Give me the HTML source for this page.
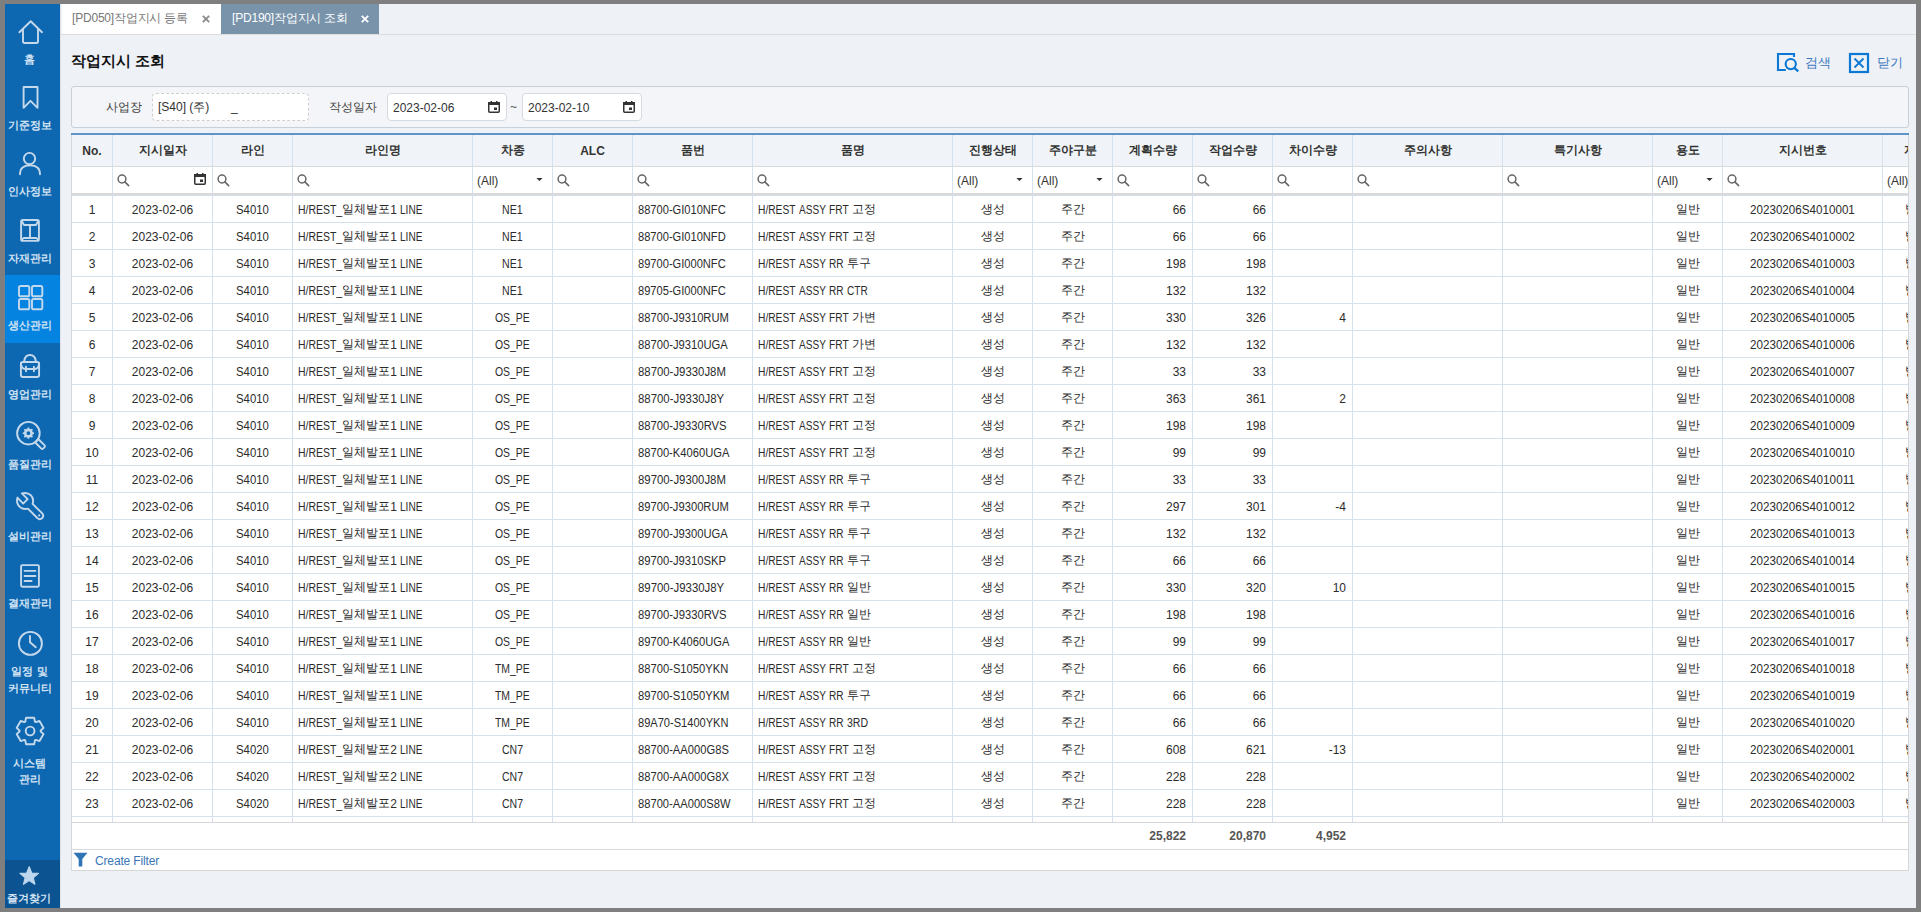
<!DOCTYPE html>
<html><head><meta charset="utf-8"><title>작업지시 조회</title>
<style>
*{box-sizing:border-box;margin:0;padding:0}
html,body{width:1921px;height:912px;overflow:hidden}
body{position:relative;background:#7f7f7f;font-family:"Liberation Sans",sans-serif;font-size:12px;color:#2b2b2b}
.a{position:absolute}
#side{left:5px;top:4px;width:55px;height:904px;background:#0d67b1}
.si{position:absolute;left:0;width:55px;text-align:center;color:#d0e2f3;font-weight:bold;font-size:11px;line-height:12px;white-space:nowrap}
.si svg{position:absolute;left:0;top:0}
#main{left:60px;top:4px;width:1856px;height:904px;background:#eef1f6;border-left:1px solid #dfe4ea}
.tab{position:absolute;top:4px;height:30px;font-size:12px;letter-spacing:-0.2px;line-height:29px;white-space:nowrap}
.cell{position:absolute;height:26px;line-height:28px;white-space:nowrap;overflow:hidden}
.ls{}.ls2{}
.k{position:relative;top:-1px}
.sx{display:inline-block}.sx>span{display:inline-block;transform-origin:0 0;white-space:pre}
.hd{position:absolute;height:31px;line-height:32px;text-align:center;font-weight:bold;color:#333;white-space:nowrap;overflow:hidden}
.vl{position:absolute;width:1px;background:#d5e1ec}
.hl{position:absolute;height:1px;background:#d5e1ec}
.c{text-align:center}.l{text-align:left;padding-left:5px}.r{text-align:right;padding-right:6px}
</style></head><body>
<div id="side" class="a"></div><div class="a" style="left:5px;top:275px;width:55px;height:68px;background:#0583e0"></div><div class="a" style="left:5px;top:860px;width:55px;height:48px;background:#0b5391"></div><svg class="a" style="left:0;top:0" width="60" height="912"><path d="M19.4 32.2 L30.7 21.2 L42 32.2 M23 28.8 V41.3 Q23 43 24.7 43 H36.3 Q38 43 38 41.3 V28.8" fill="none" stroke="#c5d9ec" stroke-width="1.9" stroke-linecap="round" stroke-linejoin="round"/><path d="M23.6 87 H37.5 V107.8 L30.5 100.8 L23.6 107.8 Z" fill="none" stroke="#c5d9ec" stroke-width="1.9" stroke-linecap="round" stroke-linejoin="round" stroke-linejoin="miter" stroke-linecap="butt"/><circle cx="29.5" cy="158.6" r="5.7" fill="none" stroke="#c5d9ec" stroke-width="1.9" stroke-linecap="round" stroke-linejoin="round"/><path d="M20 174.3 Q20 165.4 30 165.4 Q40 165.4 40 174.3" fill="none" stroke="#c5d9ec" stroke-width="1.9" stroke-linecap="round" stroke-linejoin="round"/><rect x="21.1" y="220" width="17.8" height="20.9" rx="2.2" fill="none" stroke="#c5d9ec" stroke-width="1.9" stroke-linecap="round" stroke-linejoin="round"/><path d="M21.5 220.5 L24 225 H36 L38.5 220.5 M30 225 V237.8 M21.5 240.5 L23.5 238 H36.5 L38.5 240.5" fill="none" stroke="#c5d9ec" stroke-width="1.9" stroke-linecap="round" stroke-linejoin="round"/><rect x="19" y="286" width="10.3" height="10.3" rx="1.6" fill="none" stroke="#c5d9ec" stroke-width="1.9" stroke-linecap="round" stroke-linejoin="round"/><rect x="32" y="286" width="10.3" height="10.3" rx="1.6" fill="none" stroke="#c5d9ec" stroke-width="1.9" stroke-linecap="round" stroke-linejoin="round"/><rect x="19" y="299" width="10.3" height="10.3" rx="1.6" fill="none" stroke="#c5d9ec" stroke-width="1.9" stroke-linecap="round" stroke-linejoin="round"/><rect x="32" y="299" width="10.3" height="10.3" rx="1.6" fill="none" stroke="#c5d9ec" stroke-width="1.9" stroke-linecap="round" stroke-linejoin="round"/><path d="M24.2 361 Q25 355 30 355 Q35 355 35.8 361" fill="none" stroke="#c5d9ec" stroke-width="1.9" stroke-linecap="round" stroke-linejoin="round"/><rect x="20.9" y="362" width="18.2" height="15" rx="2" fill="none" stroke="#c5d9ec" stroke-width="1.9" stroke-linecap="round" stroke-linejoin="round"/><path d="M21 363 Q21 369 25.5 369 H34.5 Q39 369 39 363 M26 366.8 V371.3 M33.9 366.8 V371.3" fill="none" stroke="#c5d9ec" stroke-width="1.9" stroke-linecap="round" stroke-linejoin="round"/><circle cx="28.4" cy="433.2" r="11.3" fill="none" stroke="#c5d9ec" stroke-width="1.9" stroke-linecap="round" stroke-linejoin="round"/><rect x="-5" y="-2.3" width="10" height="4.6" rx="1.2" transform="translate(40.3 444.3) rotate(45)" fill="none" stroke="#c5d9ec" stroke-width="1.9" stroke-linecap="round" stroke-linejoin="round"/><path d="M27.35 428.82 L27.62 427.55 L29.18 427.55 L29.45 428.82 L30.75 429.36 L31.84 428.66 L32.94 429.76 L32.24 430.85 L32.78 432.15 L34.05 432.42 L34.05 433.98 L32.78 434.25 L32.24 435.55 L32.94 436.64 L31.84 437.74 L30.75 437.04 L29.45 437.58 L29.18 438.85 L27.62 438.85 L27.35 437.58 L26.05 437.04 L24.96 437.74 L23.86 436.64 L24.56 435.55 L24.02 434.25 L22.75 433.98 L22.75 432.42 L24.02 432.15 L24.56 430.85 L23.86 429.76 L24.96 428.66 L26.05 429.36 Z M30.30 433.20 A1.9 1.9 0 1 0 26.50 433.20 A1.9 1.9 0 1 0 30.30 433.20 Z" fill="#c5d9ec" fill-rule="evenodd"/><path d="M21.9 493.4 L27.6 499.2 L23.2 503.6 L17.4 497.6 Q15.8 504.5 21 507.8 Q24.5 509.6 27.9 508.6 L37.3 518 Q39.8 520.3 42.2 518 Q44.4 515.6 42 513.2 L32.6 503.9 Q34.2 499 31 495.4 Q27.3 492 21.9 493.4 Z" fill="none" stroke="#c5d9ec" stroke-width="1.9" stroke-linecap="round" stroke-linejoin="round"/><circle cx="39.2" cy="515.4" r="1.1" fill="#c5d9ec"/><rect x="21.1" y="565.1" width="17.8" height="21.7" rx="1.2" fill="none" stroke="#c5d9ec" stroke-width="1.9" stroke-linecap="round" stroke-linejoin="round"/><path d="M24.6 570.9 H35.4 M24.6 576 H35.4 M24.6 581 H31.6" fill="none" stroke="#c5d9ec" stroke-width="1.9" stroke-linecap="round" stroke-linejoin="round" stroke-linecap="square"/><circle cx="30.4" cy="643.4" r="11.5" fill="none" stroke="#c5d9ec" stroke-width="1.9" stroke-linecap="round" stroke-linejoin="round"/><path d="M30 636 V642.3 L35.8 647.2" fill="none" stroke="#c5d9ec" stroke-width="1.9" stroke-linecap="round" stroke-linejoin="round"/><path d="M25.29 721.56 L26.07 717.80 L34.13 717.80 L34.91 721.56 L35.87 722.11 L39.51 720.91 L43.55 727.90 L40.69 730.45 L40.69 731.55 L43.55 734.10 L39.51 741.09 L35.87 739.89 L34.91 740.44 L34.13 744.20 L26.07 744.20 L25.29 740.44 L24.33 739.89 L20.69 741.09 L16.65 734.10 L19.51 731.55 L19.51 730.45 L16.65 727.90 L20.69 720.91 L24.33 722.11 Z" fill="none" stroke="#c5d9ec" stroke-width="1.9" stroke-linecap="round" stroke-linejoin="round" stroke-linejoin="miter"/><circle cx="30.1" cy="731" r="4.4" fill="none" stroke="#c5d9ec" stroke-width="1.9" stroke-linecap="round" stroke-linejoin="round"/><path d="M29.20 866.70 L31.67 873.00 L38.43 873.40 L33.19 877.70 L34.90 884.25 L29.20 880.60 L23.50 884.25 L25.21 877.70 L19.97 873.40 L26.73 873.00 Z" fill="#bcd6ee" stroke="#bcd6ee" stroke-width="1.2" stroke-linejoin="round"/></svg><div class="si" style="left:2px;top:53px">홈</div><div class="si" style="left:2px;top:119px">기준정보</div><div class="si" style="left:2px;top:185px">인사정보</div><div class="si" style="left:2px;top:252px">자재관리</div><div class="si" style="left:2px;top:319px">생산관리</div><div class="si" style="left:2px;top:388px">영업관리</div><div class="si" style="left:2px;top:458px">품질관리</div><div class="si" style="left:2px;top:530px">설비관리</div><div class="si" style="left:2px;top:597px">결재관리</div><div class="si" style="left:2px;top:665px">일정 및</div><div class="si" style="left:2px;top:682px">커뮤니티</div><div class="si" style="left:2px;top:757px">시스템</div><div class="si" style="left:2px;top:773px">관리</div><div class="si" style="left:1px;top:892px">즐겨찾기</div><div id="main" class="a"></div><div class="a" style="left:61px;top:34px;width:1855px;height:1px;background:#dcdcdc"></div><div class="tab" style="left:62px;width:159px;background:#fff;color:#777"><span class="a" style="left:10px;top:0">[PD050]작업지시 등록</span><svg class="a" style="left:140px;top:11px" width="9" height="9"><path d="M0.8 0.8 L7.2 7.2 M7.2 0.8 L0.8 7.2" stroke="#8a8a8a" stroke-width="1.8"/></svg></div><div class="tab" style="left:221px;width:158px;background:#7893aa;color:#fff"><span class="a" style="left:11px;top:0">[PD190]작업지시 조회</span><svg class="a" style="left:140px;top:11px" width="9" height="9"><path d="M0.8 0.8 L7.2 7.2 M7.2 0.8 L0.8 7.2" stroke="#fff" stroke-width="1.8"/></svg></div><div class="a" style="left:71px;top:50px;font-size:14.5px;font-weight:bold;color:#111;line-height:22px">작업지시 조회</div><svg class="a" style="left:1770px;top:48px" width="140" height="30"><path d="M24 9 V6 H8 V22 H15.8" fill="none" stroke="#0a78d4" stroke-width="2.1"/><circle cx="20.75" cy="16.1" r="5.1" fill="none" stroke="#0a78d4" stroke-width="2.1"/><path d="M24.4 19.8 L28.2 23.4" fill="none" stroke="#0a78d4" stroke-width="2.3"/><rect x="80" y="6" width="18" height="18" fill="none" stroke="#0a78d4" stroke-width="2.2"/><path d="M84.5 10.5 L93.5 19.5 M93.5 10.5 L84.5 19.5" fill="none" stroke="#0a78d4" stroke-width="1.8"/></svg><div class="a" style="left:1805px;top:54px;font-size:12.5px;line-height:18px;color:#3d78c0">검색</div><div class="a" style="left:1877px;top:54px;font-size:12.5px;line-height:18px;color:#3d78c0">닫기</div><div class="a" style="left:71px;top:86px;width:1838px;height:42px;background:#f3f5f8;border:1px solid #c8d0da;border-radius:3px"></div><div class="a" style="left:106px;top:98px;font-size:12px;line-height:18px;color:#444">사업장</div><div class="a" style="left:152px;top:93px;width:157px;height:28px;background:#fff;border:1px dashed #cfcfcf;border-radius:4px"></div><div class="a" style="left:158px;top:98px;font-size:12px;line-height:18px;color:#333">[S40] (주)</div><div class="a" style="left:231px;top:98px;font-size:12px;line-height:18px;color:#333">_</div><div class="a" style="left:329px;top:98px;font-size:12px;line-height:18px;color:#444">작성일자</div><div class="a" style="left:387px;top:93px;width:120px;height:28px;background:#fff;border:1px solid #d6dade;border-radius:4px"></div><div class="a" style="left:393px;top:99px;font-size:12px;line-height:18px;color:#333">2023-02-06</div><svg class="a" style="left:488px;top:101px" width="12" height="12"><rect x="0.75" y="1.75" width="10.5" height="9.5" rx="1" fill="none" stroke="#333" stroke-width="1.5"/><rect x="0" y="1" width="12" height="3" fill="#333"/><rect x="2.5" y="0" width="1.5" height="2" fill="#333"/><rect x="8" y="0" width="1.5" height="2" fill="#333"/><rect x="6" y="6.5" width="3" height="2.5" fill="#333"/></svg><div class="a" style="left:522px;top:93px;width:120px;height:28px;background:#fff;border:1px solid #d6dade;border-radius:4px"></div><div class="a" style="left:528px;top:99px;font-size:12px;line-height:18px;color:#333">2023-02-10</div><svg class="a" style="left:623px;top:101px" width="12" height="12"><rect x="0.75" y="1.75" width="10.5" height="9.5" rx="1" fill="none" stroke="#333" stroke-width="1.5"/><rect x="0" y="1" width="12" height="3" fill="#333"/><rect x="2.5" y="0" width="1.5" height="2" fill="#333"/><rect x="8" y="0" width="1.5" height="2" fill="#333"/><rect x="6" y="6.5" width="3" height="2.5" fill="#333"/></svg><div class="a" style="left:510px;top:98px;font-size:12px;line-height:18px;color:#555">~</div><div class="a" style="left:71px;top:133px;width:1838px;height:738px;background:#fff;border-left:1px solid #d8d8d8;border-right:1px solid #d6d6d6;border-bottom:1px solid #d6d6d6"></div><div class="a" style="left:71px;top:133px;width:1838px;height:2px;background:#5f94c8"></div><div class="a" style="left:72px;top:135px;width:1836px;height:31px;background:#f0f3f7"></div><div class="a" style="left:72px;top:166px;width:1836px;height:1px;background:#d9dbde"></div><div class="a" style="left:72px;top:193px;width:1836px;height:2px;background:#d9d9d9"></div><div class="a" style="left:72px;top:195px;width:1836px;height:1px;background:#d3dfea"></div><div class="a" style="left:72px;top:135px;width:1836px;height:687px;overflow:hidden"><div class="vl" style="left:40px;top:0;height:58px"></div><div class="vl" style="left:40px;top:61px;height:626px"></div><div class="vl" style="left:140px;top:0;height:58px"></div><div class="vl" style="left:140px;top:61px;height:626px"></div><div class="vl" style="left:220px;top:0;height:58px"></div><div class="vl" style="left:220px;top:61px;height:626px"></div><div class="vl" style="left:400px;top:0;height:58px"></div><div class="vl" style="left:400px;top:61px;height:626px"></div><div class="vl" style="left:480px;top:0;height:58px"></div><div class="vl" style="left:480px;top:61px;height:626px"></div><div class="vl" style="left:560px;top:0;height:58px"></div><div class="vl" style="left:560px;top:61px;height:626px"></div><div class="vl" style="left:680px;top:0;height:58px"></div><div class="vl" style="left:680px;top:61px;height:626px"></div><div class="vl" style="left:880px;top:0;height:58px"></div><div class="vl" style="left:880px;top:61px;height:626px"></div><div class="vl" style="left:960px;top:0;height:58px"></div><div class="vl" style="left:960px;top:61px;height:626px"></div><div class="vl" style="left:1040px;top:0;height:58px"></div><div class="vl" style="left:1040px;top:61px;height:626px"></div><div class="vl" style="left:1120px;top:0;height:58px"></div><div class="vl" style="left:1120px;top:61px;height:626px"></div><div class="vl" style="left:1200px;top:0;height:58px"></div><div class="vl" style="left:1200px;top:61px;height:626px"></div><div class="vl" style="left:1280px;top:0;height:58px"></div><div class="vl" style="left:1280px;top:61px;height:626px"></div><div class="vl" style="left:1430px;top:0;height:58px"></div><div class="vl" style="left:1430px;top:61px;height:626px"></div><div class="vl" style="left:1580px;top:0;height:58px"></div><div class="vl" style="left:1580px;top:61px;height:626px"></div><div class="vl" style="left:1650px;top:0;height:58px"></div><div class="vl" style="left:1650px;top:61px;height:626px"></div><div class="vl" style="left:1810px;top:0;height:58px"></div><div class="vl" style="left:1810px;top:61px;height:626px"></div><div class="hd" style="left:0px;top:0;width:40px">No.</div><div class="hd" style="left:41px;top:0;width:99px"><span class="k">지시일자</span></div><div class="hd" style="left:141px;top:0;width:79px"><span class="k">라인</span></div><div class="hd" style="left:221px;top:0;width:179px"><span class="k">라인명</span></div><div class="hd" style="left:401px;top:0;width:79px"><span class="k">차종</span></div><div class="hd" style="left:481px;top:0;width:79px">ALC</div><div class="hd" style="left:561px;top:0;width:119px"><span class="k">품번</span></div><div class="hd" style="left:681px;top:0;width:199px"><span class="k">품명</span></div><div class="hd" style="left:881px;top:0;width:79px"><span class="k">진행상태</span></div><div class="hd" style="left:961px;top:0;width:79px"><span class="k">주야구분</span></div><div class="hd" style="left:1041px;top:0;width:79px"><span class="k">계획수량</span></div><div class="hd" style="left:1121px;top:0;width:79px"><span class="k">작업수량</span></div><div class="hd" style="left:1201px;top:0;width:79px"><span class="k">차이수량</span></div><div class="hd" style="left:1281px;top:0;width:149px"><span class="k">주의사항</span></div><div class="hd" style="left:1431px;top:0;width:149px"><span class="k">특기사항</span></div><div class="hd" style="left:1581px;top:0;width:69px"><span class="k">용도</span></div><div class="hd" style="left:1651px;top:0;width:159px"><span class="k">지시번호</span></div><div class="hd" style="left:1832px;top:0;width:60px;text-align:left"><span class="k">지시구분</span></div><svg class="a" style="left:45px;top:39px" width="14" height="14"><circle cx="5" cy="5" r="3.9" fill="none" stroke="#666" stroke-width="1.5"/><path d="M7.9 7.9 L11.6 11.6" stroke="#666" stroke-width="1.6" stroke-linecap="round"/></svg><svg class="a" style="left:122px;top:38px" width="12" height="12"><rect x="0.75" y="1.75" width="10.5" height="9.5" rx="1" fill="none" stroke="#333" stroke-width="1.5"/><rect x="0" y="1" width="12" height="3" fill="#333"/><rect x="2.5" y="0" width="1.5" height="2" fill="#333"/><rect x="8" y="0" width="1.5" height="2" fill="#333"/><rect x="6" y="6.5" width="3" height="2.5" fill="#333"/></svg><svg class="a" style="left:145px;top:39px" width="14" height="14"><circle cx="5" cy="5" r="3.9" fill="none" stroke="#666" stroke-width="1.5"/><path d="M7.9 7.9 L11.6 11.6" stroke="#666" stroke-width="1.6" stroke-linecap="round"/></svg><svg class="a" style="left:225px;top:39px" width="14" height="14"><circle cx="5" cy="5" r="3.9" fill="none" stroke="#666" stroke-width="1.5"/><path d="M7.9 7.9 L11.6 11.6" stroke="#666" stroke-width="1.6" stroke-linecap="round"/></svg><div class="a" style="left:405px;top:33px;line-height:26px;color:#333">(All)</div><svg class="a" style="left:464px;top:43px" width="8" height="5"><path d="M0.4 0 H6.6 L3.5 3 Z" fill="#333"/></svg><svg class="a" style="left:485px;top:39px" width="14" height="14"><circle cx="5" cy="5" r="3.9" fill="none" stroke="#666" stroke-width="1.5"/><path d="M7.9 7.9 L11.6 11.6" stroke="#666" stroke-width="1.6" stroke-linecap="round"/></svg><svg class="a" style="left:565px;top:39px" width="14" height="14"><circle cx="5" cy="5" r="3.9" fill="none" stroke="#666" stroke-width="1.5"/><path d="M7.9 7.9 L11.6 11.6" stroke="#666" stroke-width="1.6" stroke-linecap="round"/></svg><svg class="a" style="left:685px;top:39px" width="14" height="14"><circle cx="5" cy="5" r="3.9" fill="none" stroke="#666" stroke-width="1.5"/><path d="M7.9 7.9 L11.6 11.6" stroke="#666" stroke-width="1.6" stroke-linecap="round"/></svg><div class="a" style="left:885px;top:33px;line-height:26px;color:#333">(All)</div><svg class="a" style="left:944px;top:43px" width="8" height="5"><path d="M0.4 0 H6.6 L3.5 3 Z" fill="#333"/></svg><div class="a" style="left:965px;top:33px;line-height:26px;color:#333">(All)</div><svg class="a" style="left:1024px;top:43px" width="8" height="5"><path d="M0.4 0 H6.6 L3.5 3 Z" fill="#333"/></svg><svg class="a" style="left:1045px;top:39px" width="14" height="14"><circle cx="5" cy="5" r="3.9" fill="none" stroke="#666" stroke-width="1.5"/><path d="M7.9 7.9 L11.6 11.6" stroke="#666" stroke-width="1.6" stroke-linecap="round"/></svg><svg class="a" style="left:1125px;top:39px" width="14" height="14"><circle cx="5" cy="5" r="3.9" fill="none" stroke="#666" stroke-width="1.5"/><path d="M7.9 7.9 L11.6 11.6" stroke="#666" stroke-width="1.6" stroke-linecap="round"/></svg><svg class="a" style="left:1205px;top:39px" width="14" height="14"><circle cx="5" cy="5" r="3.9" fill="none" stroke="#666" stroke-width="1.5"/><path d="M7.9 7.9 L11.6 11.6" stroke="#666" stroke-width="1.6" stroke-linecap="round"/></svg><svg class="a" style="left:1285px;top:39px" width="14" height="14"><circle cx="5" cy="5" r="3.9" fill="none" stroke="#666" stroke-width="1.5"/><path d="M7.9 7.9 L11.6 11.6" stroke="#666" stroke-width="1.6" stroke-linecap="round"/></svg><svg class="a" style="left:1435px;top:39px" width="14" height="14"><circle cx="5" cy="5" r="3.9" fill="none" stroke="#666" stroke-width="1.5"/><path d="M7.9 7.9 L11.6 11.6" stroke="#666" stroke-width="1.6" stroke-linecap="round"/></svg><div class="a" style="left:1585px;top:33px;line-height:26px;color:#333">(All)</div><svg class="a" style="left:1634px;top:43px" width="8" height="5"><path d="M0.4 0 H6.6 L3.5 3 Z" fill="#333"/></svg><svg class="a" style="left:1655px;top:39px" width="14" height="14"><circle cx="5" cy="5" r="3.9" fill="none" stroke="#666" stroke-width="1.5"/><path d="M7.9 7.9 L11.6 11.6" stroke="#666" stroke-width="1.6" stroke-linecap="round"/></svg><div class="a" style="left:1815px;top:33px;line-height:26px;color:#333">(All)</div><div class="hl" style="left:0;top:87px;width:1838px"></div><div class="cell" style="left:1833px;top:61px;width:40px"><span class="k">발행</span></div><div class="cell c" style="left:0px;top:61px;width:40px">1</div><div class="cell c" style="left:41px;top:61px;width:99px">2023-02-06</div><div class="cell c" style="left:141px;top:61px;width:79px"><span class="sx" style="width:32.87px"><span style="transform:scaleX(0.9477)">S4010</span></span></div><div class="cell l ls" style="left:221px;top:61px;width:179px"><span class="sx" style="width:44.16px"><span style="transform:scaleX(0.8716)">H/REST_</span></span><span class="k">일체발포</span>1 <span class="sx" style="width:22.40px"><span style="transform:scaleX(0.8400)">LINE</span></span></div><div class="cell c ls" style="left:401px;top:61px;width:79px"><span class="sx" style="width:20.54px"><span style="transform:scaleX(0.8800)">NE1</span></span></div><div class="cell l ls" style="left:561px;top:61px;width:119px"><span class="sx" style="width:87.66px"><span style="transform:scaleX(0.9257)">88700-GI010NFC</span></span></div><div class="cell l ls" style="left:681px;top:61px;width:199px"><span class="sx" style="width:37.49px"><span style="transform:scaleX(0.8521)">H/REST</span></span> <span class="sx" style="width:26.88px"><span style="transform:scaleX(0.8400)">ASSY</span></span> <span class="sx" style="width:19.60px"><span style="transform:scaleX(0.8480)">FRT</span></span> <span class="k">고정</span></div><div class="cell c" style="left:881px;top:61px;width:79px"><span class="k">생성</span></div><div class="cell c" style="left:961px;top:61px;width:79px"><span class="k">주간</span></div><div class="cell r" style="left:1041px;top:61px;width:79px">66</div><div class="cell r" style="left:1121px;top:61px;width:79px">66</div><div class="cell c" style="left:1581px;top:61px;width:69px"><span class="k">일반</span></div><div class="cell c ls2" style="left:1651px;top:61px;width:159px"><span class="sx" style="width:104.80px"><span style="transform:scaleX(0.9696)">20230206S4010001</span></span></div><div class="hl" style="left:0;top:114px;width:1838px"></div><div class="cell" style="left:1833px;top:88px;width:40px"><span class="k">발행</span></div><div class="cell c" style="left:0px;top:88px;width:40px">2</div><div class="cell c" style="left:41px;top:88px;width:99px">2023-02-06</div><div class="cell c" style="left:141px;top:88px;width:79px"><span class="sx" style="width:32.87px"><span style="transform:scaleX(0.9477)">S4010</span></span></div><div class="cell l ls" style="left:221px;top:88px;width:179px"><span class="sx" style="width:44.16px"><span style="transform:scaleX(0.8716)">H/REST_</span></span><span class="k">일체발포</span>1 <span class="sx" style="width:22.40px"><span style="transform:scaleX(0.8400)">LINE</span></span></div><div class="cell c ls" style="left:401px;top:88px;width:79px"><span class="sx" style="width:20.54px"><span style="transform:scaleX(0.8800)">NE1</span></span></div><div class="cell l ls" style="left:561px;top:88px;width:119px"><span class="sx" style="width:87.66px"><span style="transform:scaleX(0.9257)">88700-GI010NFD</span></span></div><div class="cell l ls" style="left:681px;top:88px;width:199px"><span class="sx" style="width:37.49px"><span style="transform:scaleX(0.8521)">H/REST</span></span> <span class="sx" style="width:26.88px"><span style="transform:scaleX(0.8400)">ASSY</span></span> <span class="sx" style="width:19.60px"><span style="transform:scaleX(0.8480)">FRT</span></span> <span class="k">고정</span></div><div class="cell c" style="left:881px;top:88px;width:79px"><span class="k">생성</span></div><div class="cell c" style="left:961px;top:88px;width:79px"><span class="k">주간</span></div><div class="cell r" style="left:1041px;top:88px;width:79px">66</div><div class="cell r" style="left:1121px;top:88px;width:79px">66</div><div class="cell c" style="left:1581px;top:88px;width:69px"><span class="k">일반</span></div><div class="cell c ls2" style="left:1651px;top:88px;width:159px"><span class="sx" style="width:104.80px"><span style="transform:scaleX(0.9696)">20230206S4010002</span></span></div><div class="hl" style="left:0;top:141px;width:1838px"></div><div class="cell" style="left:1833px;top:115px;width:40px"><span class="k">발행</span></div><div class="cell c" style="left:0px;top:115px;width:40px">3</div><div class="cell c" style="left:41px;top:115px;width:99px">2023-02-06</div><div class="cell c" style="left:141px;top:115px;width:79px"><span class="sx" style="width:32.87px"><span style="transform:scaleX(0.9477)">S4010</span></span></div><div class="cell l ls" style="left:221px;top:115px;width:179px"><span class="sx" style="width:44.16px"><span style="transform:scaleX(0.8716)">H/REST_</span></span><span class="k">일체발포</span>1 <span class="sx" style="width:22.40px"><span style="transform:scaleX(0.8400)">LINE</span></span></div><div class="cell c ls" style="left:401px;top:115px;width:79px"><span class="sx" style="width:20.54px"><span style="transform:scaleX(0.8800)">NE1</span></span></div><div class="cell l ls" style="left:561px;top:115px;width:119px"><span class="sx" style="width:87.66px"><span style="transform:scaleX(0.9257)">89700-GI000NFC</span></span></div><div class="cell l ls" style="left:681px;top:115px;width:199px"><span class="sx" style="width:37.49px"><span style="transform:scaleX(0.8521)">H/REST</span></span> <span class="sx" style="width:26.88px"><span style="transform:scaleX(0.8400)">ASSY</span></span> <span class="sx" style="width:14.57px"><span style="transform:scaleX(0.8400)">RR</span></span> <span class="k">투구</span></div><div class="cell c" style="left:881px;top:115px;width:79px"><span class="k">생성</span></div><div class="cell c" style="left:961px;top:115px;width:79px"><span class="k">주간</span></div><div class="cell r" style="left:1041px;top:115px;width:79px">198</div><div class="cell r" style="left:1121px;top:115px;width:79px">198</div><div class="cell c" style="left:1581px;top:115px;width:69px"><span class="k">일반</span></div><div class="cell c ls2" style="left:1651px;top:115px;width:159px"><span class="sx" style="width:104.80px"><span style="transform:scaleX(0.9696)">20230206S4010003</span></span></div><div class="hl" style="left:0;top:168px;width:1838px"></div><div class="cell" style="left:1833px;top:142px;width:40px"><span class="k">발행</span></div><div class="cell c" style="left:0px;top:142px;width:40px">4</div><div class="cell c" style="left:41px;top:142px;width:99px">2023-02-06</div><div class="cell c" style="left:141px;top:142px;width:79px"><span class="sx" style="width:32.87px"><span style="transform:scaleX(0.9477)">S4010</span></span></div><div class="cell l ls" style="left:221px;top:142px;width:179px"><span class="sx" style="width:44.16px"><span style="transform:scaleX(0.8716)">H/REST_</span></span><span class="k">일체발포</span>1 <span class="sx" style="width:22.40px"><span style="transform:scaleX(0.8400)">LINE</span></span></div><div class="cell c ls" style="left:401px;top:142px;width:79px"><span class="sx" style="width:20.54px"><span style="transform:scaleX(0.8800)">NE1</span></span></div><div class="cell l ls" style="left:561px;top:142px;width:119px"><span class="sx" style="width:87.66px"><span style="transform:scaleX(0.9257)">89705-GI000NFC</span></span></div><div class="cell l ls" style="left:681px;top:142px;width:199px"><span class="sx" style="width:37.49px"><span style="transform:scaleX(0.8521)">H/REST</span></span> <span class="sx" style="width:26.88px"><span style="transform:scaleX(0.8400)">ASSY</span></span> <span class="sx" style="width:14.57px"><span style="transform:scaleX(0.8400)">RR</span></span> <span class="sx" style="width:20.72px"><span style="transform:scaleX(0.8400)">CTR</span></span></div><div class="cell c" style="left:881px;top:142px;width:79px"><span class="k">생성</span></div><div class="cell c" style="left:961px;top:142px;width:79px"><span class="k">주간</span></div><div class="cell r" style="left:1041px;top:142px;width:79px">132</div><div class="cell r" style="left:1121px;top:142px;width:79px">132</div><div class="cell c" style="left:1581px;top:142px;width:69px"><span class="k">일반</span></div><div class="cell c ls2" style="left:1651px;top:142px;width:159px"><span class="sx" style="width:104.80px"><span style="transform:scaleX(0.9696)">20230206S4010004</span></span></div><div class="hl" style="left:0;top:195px;width:1838px"></div><div class="cell" style="left:1833px;top:169px;width:40px"><span class="k">발행</span></div><div class="cell c" style="left:0px;top:169px;width:40px">5</div><div class="cell c" style="left:41px;top:169px;width:99px">2023-02-06</div><div class="cell c" style="left:141px;top:169px;width:79px"><span class="sx" style="width:32.87px"><span style="transform:scaleX(0.9477)">S4010</span></span></div><div class="cell l ls" style="left:221px;top:169px;width:179px"><span class="sx" style="width:44.16px"><span style="transform:scaleX(0.8716)">H/REST_</span></span><span class="k">일체발포</span>1 <span class="sx" style="width:22.40px"><span style="transform:scaleX(0.8400)">LINE</span></span></div><div class="cell c ls" style="left:401px;top:169px;width:79px"><span class="sx" style="width:34.67px"><span style="transform:scaleX(0.8667)">OS_PE</span></span></div><div class="cell l ls" style="left:561px;top:169px;width:119px"><span class="sx" style="width:90.85px"><span style="transform:scaleX(0.9329)">88700-J9310RUM</span></span></div><div class="cell l ls" style="left:681px;top:169px;width:199px"><span class="sx" style="width:37.49px"><span style="transform:scaleX(0.8521)">H/REST</span></span> <span class="sx" style="width:26.88px"><span style="transform:scaleX(0.8400)">ASSY</span></span> <span class="sx" style="width:19.60px"><span style="transform:scaleX(0.8480)">FRT</span></span> <span class="k">가변</span></div><div class="cell c" style="left:881px;top:169px;width:79px"><span class="k">생성</span></div><div class="cell c" style="left:961px;top:169px;width:79px"><span class="k">주간</span></div><div class="cell r" style="left:1041px;top:169px;width:79px">330</div><div class="cell r" style="left:1121px;top:169px;width:79px">326</div><div class="cell r" style="left:1201px;top:169px;width:79px">4</div><div class="cell c" style="left:1581px;top:169px;width:69px"><span class="k">일반</span></div><div class="cell c ls2" style="left:1651px;top:169px;width:159px"><span class="sx" style="width:104.80px"><span style="transform:scaleX(0.9696)">20230206S4010005</span></span></div><div class="hl" style="left:0;top:222px;width:1838px"></div><div class="cell" style="left:1833px;top:196px;width:40px"><span class="k">발행</span></div><div class="cell c" style="left:0px;top:196px;width:40px">6</div><div class="cell c" style="left:41px;top:196px;width:99px">2023-02-06</div><div class="cell c" style="left:141px;top:196px;width:79px"><span class="sx" style="width:32.87px"><span style="transform:scaleX(0.9477)">S4010</span></span></div><div class="cell l ls" style="left:221px;top:196px;width:179px"><span class="sx" style="width:44.16px"><span style="transform:scaleX(0.8716)">H/REST_</span></span><span class="k">일체발포</span>1 <span class="sx" style="width:22.40px"><span style="transform:scaleX(0.8400)">LINE</span></span></div><div class="cell c ls" style="left:401px;top:196px;width:79px"><span class="sx" style="width:34.67px"><span style="transform:scaleX(0.8667)">OS_PE</span></span></div><div class="cell l ls" style="left:561px;top:196px;width:119px"><span class="sx" style="width:89.73px"><span style="transform:scaleX(0.9342)">88700-J9310UGA</span></span></div><div class="cell l ls" style="left:681px;top:196px;width:199px"><span class="sx" style="width:37.49px"><span style="transform:scaleX(0.8521)">H/REST</span></span> <span class="sx" style="width:26.88px"><span style="transform:scaleX(0.8400)">ASSY</span></span> <span class="sx" style="width:19.60px"><span style="transform:scaleX(0.8480)">FRT</span></span> <span class="k">가변</span></div><div class="cell c" style="left:881px;top:196px;width:79px"><span class="k">생성</span></div><div class="cell c" style="left:961px;top:196px;width:79px"><span class="k">주간</span></div><div class="cell r" style="left:1041px;top:196px;width:79px">132</div><div class="cell r" style="left:1121px;top:196px;width:79px">132</div><div class="cell c" style="left:1581px;top:196px;width:69px"><span class="k">일반</span></div><div class="cell c ls2" style="left:1651px;top:196px;width:159px"><span class="sx" style="width:104.80px"><span style="transform:scaleX(0.9696)">20230206S4010006</span></span></div><div class="hl" style="left:0;top:249px;width:1838px"></div><div class="cell" style="left:1833px;top:223px;width:40px"><span class="k">발행</span></div><div class="cell c" style="left:0px;top:223px;width:40px">7</div><div class="cell c" style="left:41px;top:223px;width:99px">2023-02-06</div><div class="cell c" style="left:141px;top:223px;width:79px"><span class="sx" style="width:32.87px"><span style="transform:scaleX(0.9477)">S4010</span></span></div><div class="cell l ls" style="left:221px;top:223px;width:179px"><span class="sx" style="width:44.16px"><span style="transform:scaleX(0.8716)">H/REST_</span></span><span class="k">일체발포</span>1 <span class="sx" style="width:22.40px"><span style="transform:scaleX(0.8400)">LINE</span></span></div><div class="cell c ls" style="left:401px;top:223px;width:79px"><span class="sx" style="width:34.67px"><span style="transform:scaleX(0.8667)">OS_PE</span></span></div><div class="cell l ls" style="left:561px;top:223px;width:119px"><span class="sx" style="width:87.86px"><span style="transform:scaleX(0.9476)">88700-J9330J8M</span></span></div><div class="cell l ls" style="left:681px;top:223px;width:199px"><span class="sx" style="width:37.49px"><span style="transform:scaleX(0.8521)">H/REST</span></span> <span class="sx" style="width:26.88px"><span style="transform:scaleX(0.8400)">ASSY</span></span> <span class="sx" style="width:19.60px"><span style="transform:scaleX(0.8480)">FRT</span></span> <span class="k">고정</span></div><div class="cell c" style="left:881px;top:223px;width:79px"><span class="k">생성</span></div><div class="cell c" style="left:961px;top:223px;width:79px"><span class="k">주간</span></div><div class="cell r" style="left:1041px;top:223px;width:79px">33</div><div class="cell r" style="left:1121px;top:223px;width:79px">33</div><div class="cell c" style="left:1581px;top:223px;width:69px"><span class="k">일반</span></div><div class="cell c ls2" style="left:1651px;top:223px;width:159px"><span class="sx" style="width:104.80px"><span style="transform:scaleX(0.9696)">20230206S4010007</span></span></div><div class="hl" style="left:0;top:276px;width:1838px"></div><div class="cell" style="left:1833px;top:250px;width:40px"><span class="k">발행</span></div><div class="cell c" style="left:0px;top:250px;width:40px">8</div><div class="cell c" style="left:41px;top:250px;width:99px">2023-02-06</div><div class="cell c" style="left:141px;top:250px;width:79px"><span class="sx" style="width:32.87px"><span style="transform:scaleX(0.9477)">S4010</span></span></div><div class="cell l ls" style="left:221px;top:250px;width:179px"><span class="sx" style="width:44.16px"><span style="transform:scaleX(0.8716)">H/REST_</span></span><span class="k">일체발포</span>1 <span class="sx" style="width:22.40px"><span style="transform:scaleX(0.8400)">LINE</span></span></div><div class="cell c ls" style="left:401px;top:250px;width:79px"><span class="sx" style="width:34.67px"><span style="transform:scaleX(0.8667)">OS_PE</span></span></div><div class="cell l ls" style="left:561px;top:250px;width:119px"><span class="sx" style="width:86.18px"><span style="transform:scaleX(0.9500)">88700-J9330J8Y</span></span></div><div class="cell l ls" style="left:681px;top:250px;width:199px"><span class="sx" style="width:37.49px"><span style="transform:scaleX(0.8521)">H/REST</span></span> <span class="sx" style="width:26.88px"><span style="transform:scaleX(0.8400)">ASSY</span></span> <span class="sx" style="width:19.60px"><span style="transform:scaleX(0.8480)">FRT</span></span> <span class="k">고정</span></div><div class="cell c" style="left:881px;top:250px;width:79px"><span class="k">생성</span></div><div class="cell c" style="left:961px;top:250px;width:79px"><span class="k">주간</span></div><div class="cell r" style="left:1041px;top:250px;width:79px">363</div><div class="cell r" style="left:1121px;top:250px;width:79px">361</div><div class="cell r" style="left:1201px;top:250px;width:79px">2</div><div class="cell c" style="left:1581px;top:250px;width:69px"><span class="k">일반</span></div><div class="cell c ls2" style="left:1651px;top:250px;width:159px"><span class="sx" style="width:104.80px"><span style="transform:scaleX(0.9696)">20230206S4010008</span></span></div><div class="hl" style="left:0;top:303px;width:1838px"></div><div class="cell" style="left:1833px;top:277px;width:40px"><span class="k">발행</span></div><div class="cell c" style="left:0px;top:277px;width:40px">9</div><div class="cell c" style="left:41px;top:277px;width:99px">2023-02-06</div><div class="cell c" style="left:141px;top:277px;width:79px"><span class="sx" style="width:32.87px"><span style="transform:scaleX(0.9477)">S4010</span></span></div><div class="cell l ls" style="left:221px;top:277px;width:179px"><span class="sx" style="width:44.16px"><span style="transform:scaleX(0.8716)">H/REST_</span></span><span class="k">일체발포</span>1 <span class="sx" style="width:22.40px"><span style="transform:scaleX(0.8400)">LINE</span></span></div><div class="cell c ls" style="left:401px;top:277px;width:79px"><span class="sx" style="width:34.67px"><span style="transform:scaleX(0.8667)">OS_PE</span></span></div><div class="cell l ls" style="left:561px;top:277px;width:119px"><span class="sx" style="width:88.61px"><span style="transform:scaleX(0.9377)">88700-J9330RVS</span></span></div><div class="cell l ls" style="left:681px;top:277px;width:199px"><span class="sx" style="width:37.49px"><span style="transform:scaleX(0.8521)">H/REST</span></span> <span class="sx" style="width:26.88px"><span style="transform:scaleX(0.8400)">ASSY</span></span> <span class="sx" style="width:19.60px"><span style="transform:scaleX(0.8480)">FRT</span></span> <span class="k">고정</span></div><div class="cell c" style="left:881px;top:277px;width:79px"><span class="k">생성</span></div><div class="cell c" style="left:961px;top:277px;width:79px"><span class="k">주간</span></div><div class="cell r" style="left:1041px;top:277px;width:79px">198</div><div class="cell r" style="left:1121px;top:277px;width:79px">198</div><div class="cell c" style="left:1581px;top:277px;width:69px"><span class="k">일반</span></div><div class="cell c ls2" style="left:1651px;top:277px;width:159px"><span class="sx" style="width:104.80px"><span style="transform:scaleX(0.9696)">20230206S4010009</span></span></div><div class="hl" style="left:0;top:330px;width:1838px"></div><div class="cell" style="left:1833px;top:304px;width:40px"><span class="k">발행</span></div><div class="cell c" style="left:0px;top:304px;width:40px">10</div><div class="cell c" style="left:41px;top:304px;width:99px">2023-02-06</div><div class="cell c" style="left:141px;top:304px;width:79px"><span class="sx" style="width:32.87px"><span style="transform:scaleX(0.9477)">S4010</span></span></div><div class="cell l ls" style="left:221px;top:304px;width:179px"><span class="sx" style="width:44.16px"><span style="transform:scaleX(0.8716)">H/REST_</span></span><span class="k">일체발포</span>1 <span class="sx" style="width:22.40px"><span style="transform:scaleX(0.8400)">LINE</span></span></div><div class="cell c ls" style="left:401px;top:304px;width:79px"><span class="sx" style="width:34.67px"><span style="transform:scaleX(0.8667)">OS_PE</span></span></div><div class="cell l ls" style="left:561px;top:304px;width:119px"><span class="sx" style="width:91.41px"><span style="transform:scaleX(0.9323)">88700-K4060UGA</span></span></div><div class="cell l ls" style="left:681px;top:304px;width:199px"><span class="sx" style="width:37.49px"><span style="transform:scaleX(0.8521)">H/REST</span></span> <span class="sx" style="width:26.88px"><span style="transform:scaleX(0.8400)">ASSY</span></span> <span class="sx" style="width:19.60px"><span style="transform:scaleX(0.8480)">FRT</span></span> <span class="k">고정</span></div><div class="cell c" style="left:881px;top:304px;width:79px"><span class="k">생성</span></div><div class="cell c" style="left:961px;top:304px;width:79px"><span class="k">주간</span></div><div class="cell r" style="left:1041px;top:304px;width:79px">99</div><div class="cell r" style="left:1121px;top:304px;width:79px">99</div><div class="cell c" style="left:1581px;top:304px;width:69px"><span class="k">일반</span></div><div class="cell c ls2" style="left:1651px;top:304px;width:159px"><span class="sx" style="width:104.80px"><span style="transform:scaleX(0.9696)">20230206S4010010</span></span></div><div class="hl" style="left:0;top:357px;width:1838px"></div><div class="cell" style="left:1833px;top:331px;width:40px"><span class="k">발행</span></div><div class="cell c" style="left:0px;top:331px;width:40px">11</div><div class="cell c" style="left:41px;top:331px;width:99px">2023-02-06</div><div class="cell c" style="left:141px;top:331px;width:79px"><span class="sx" style="width:32.87px"><span style="transform:scaleX(0.9477)">S4010</span></span></div><div class="cell l ls" style="left:221px;top:331px;width:179px"><span class="sx" style="width:44.16px"><span style="transform:scaleX(0.8716)">H/REST_</span></span><span class="k">일체발포</span>1 <span class="sx" style="width:22.40px"><span style="transform:scaleX(0.8400)">LINE</span></span></div><div class="cell c ls" style="left:401px;top:331px;width:79px"><span class="sx" style="width:34.67px"><span style="transform:scaleX(0.8667)">OS_PE</span></span></div><div class="cell l ls" style="left:561px;top:331px;width:119px"><span class="sx" style="width:87.86px"><span style="transform:scaleX(0.9476)">89700-J9300J8M</span></span></div><div class="cell l ls" style="left:681px;top:331px;width:199px"><span class="sx" style="width:37.49px"><span style="transform:scaleX(0.8521)">H/REST</span></span> <span class="sx" style="width:26.88px"><span style="transform:scaleX(0.8400)">ASSY</span></span> <span class="sx" style="width:14.57px"><span style="transform:scaleX(0.8400)">RR</span></span> <span class="k">투구</span></div><div class="cell c" style="left:881px;top:331px;width:79px"><span class="k">생성</span></div><div class="cell c" style="left:961px;top:331px;width:79px"><span class="k">주간</span></div><div class="cell r" style="left:1041px;top:331px;width:79px">33</div><div class="cell r" style="left:1121px;top:331px;width:79px">33</div><div class="cell c" style="left:1581px;top:331px;width:69px"><span class="k">일반</span></div><div class="cell c ls2" style="left:1651px;top:331px;width:159px"><span class="sx" style="width:104.80px"><span style="transform:scaleX(0.9777)">20230206S4010011</span></span></div><div class="hl" style="left:0;top:384px;width:1838px"></div><div class="cell" style="left:1833px;top:358px;width:40px"><span class="k">발행</span></div><div class="cell c" style="left:0px;top:358px;width:40px">12</div><div class="cell c" style="left:41px;top:358px;width:99px">2023-02-06</div><div class="cell c" style="left:141px;top:358px;width:79px"><span class="sx" style="width:32.87px"><span style="transform:scaleX(0.9477)">S4010</span></span></div><div class="cell l ls" style="left:221px;top:358px;width:179px"><span class="sx" style="width:44.16px"><span style="transform:scaleX(0.8716)">H/REST_</span></span><span class="k">일체발포</span>1 <span class="sx" style="width:22.40px"><span style="transform:scaleX(0.8400)">LINE</span></span></div><div class="cell c ls" style="left:401px;top:358px;width:79px"><span class="sx" style="width:34.67px"><span style="transform:scaleX(0.8667)">OS_PE</span></span></div><div class="cell l ls" style="left:561px;top:358px;width:119px"><span class="sx" style="width:90.85px"><span style="transform:scaleX(0.9329)">89700-J9300RUM</span></span></div><div class="cell l ls" style="left:681px;top:358px;width:199px"><span class="sx" style="width:37.49px"><span style="transform:scaleX(0.8521)">H/REST</span></span> <span class="sx" style="width:26.88px"><span style="transform:scaleX(0.8400)">ASSY</span></span> <span class="sx" style="width:14.57px"><span style="transform:scaleX(0.8400)">RR</span></span> <span class="k">투구</span></div><div class="cell c" style="left:881px;top:358px;width:79px"><span class="k">생성</span></div><div class="cell c" style="left:961px;top:358px;width:79px"><span class="k">주간</span></div><div class="cell r" style="left:1041px;top:358px;width:79px">297</div><div class="cell r" style="left:1121px;top:358px;width:79px">301</div><div class="cell r" style="left:1201px;top:358px;width:79px">-4</div><div class="cell c" style="left:1581px;top:358px;width:69px"><span class="k">일반</span></div><div class="cell c ls2" style="left:1651px;top:358px;width:159px"><span class="sx" style="width:104.80px"><span style="transform:scaleX(0.9696)">20230206S4010012</span></span></div><div class="hl" style="left:0;top:411px;width:1838px"></div><div class="cell" style="left:1833px;top:385px;width:40px"><span class="k">발행</span></div><div class="cell c" style="left:0px;top:385px;width:40px">13</div><div class="cell c" style="left:41px;top:385px;width:99px">2023-02-06</div><div class="cell c" style="left:141px;top:385px;width:79px"><span class="sx" style="width:32.87px"><span style="transform:scaleX(0.9477)">S4010</span></span></div><div class="cell l ls" style="left:221px;top:385px;width:179px"><span class="sx" style="width:44.16px"><span style="transform:scaleX(0.8716)">H/REST_</span></span><span class="k">일체발포</span>1 <span class="sx" style="width:22.40px"><span style="transform:scaleX(0.8400)">LINE</span></span></div><div class="cell c ls" style="left:401px;top:385px;width:79px"><span class="sx" style="width:34.67px"><span style="transform:scaleX(0.8667)">OS_PE</span></span></div><div class="cell l ls" style="left:561px;top:385px;width:119px"><span class="sx" style="width:89.73px"><span style="transform:scaleX(0.9342)">89700-J9300UGA</span></span></div><div class="cell l ls" style="left:681px;top:385px;width:199px"><span class="sx" style="width:37.49px"><span style="transform:scaleX(0.8521)">H/REST</span></span> <span class="sx" style="width:26.88px"><span style="transform:scaleX(0.8400)">ASSY</span></span> <span class="sx" style="width:14.57px"><span style="transform:scaleX(0.8400)">RR</span></span> <span class="k">투구</span></div><div class="cell c" style="left:881px;top:385px;width:79px"><span class="k">생성</span></div><div class="cell c" style="left:961px;top:385px;width:79px"><span class="k">주간</span></div><div class="cell r" style="left:1041px;top:385px;width:79px">132</div><div class="cell r" style="left:1121px;top:385px;width:79px">132</div><div class="cell c" style="left:1581px;top:385px;width:69px"><span class="k">일반</span></div><div class="cell c ls2" style="left:1651px;top:385px;width:159px"><span class="sx" style="width:104.80px"><span style="transform:scaleX(0.9696)">20230206S4010013</span></span></div><div class="hl" style="left:0;top:438px;width:1838px"></div><div class="cell" style="left:1833px;top:412px;width:40px"><span class="k">발행</span></div><div class="cell c" style="left:0px;top:412px;width:40px">14</div><div class="cell c" style="left:41px;top:412px;width:99px">2023-02-06</div><div class="cell c" style="left:141px;top:412px;width:79px"><span class="sx" style="width:32.87px"><span style="transform:scaleX(0.9477)">S4010</span></span></div><div class="cell l ls" style="left:221px;top:412px;width:179px"><span class="sx" style="width:44.16px"><span style="transform:scaleX(0.8716)">H/REST_</span></span><span class="k">일체발포</span>1 <span class="sx" style="width:22.40px"><span style="transform:scaleX(0.8400)">LINE</span></span></div><div class="cell c ls" style="left:401px;top:412px;width:79px"><span class="sx" style="width:34.67px"><span style="transform:scaleX(0.8667)">OS_PE</span></span></div><div class="cell l ls" style="left:561px;top:412px;width:119px"><span class="sx" style="width:88.05px"><span style="transform:scaleX(0.9362)">89700-J9310SKP</span></span></div><div class="cell l ls" style="left:681px;top:412px;width:199px"><span class="sx" style="width:37.49px"><span style="transform:scaleX(0.8521)">H/REST</span></span> <span class="sx" style="width:26.88px"><span style="transform:scaleX(0.8400)">ASSY</span></span> <span class="sx" style="width:14.57px"><span style="transform:scaleX(0.8400)">RR</span></span> <span class="k">투구</span></div><div class="cell c" style="left:881px;top:412px;width:79px"><span class="k">생성</span></div><div class="cell c" style="left:961px;top:412px;width:79px"><span class="k">주간</span></div><div class="cell r" style="left:1041px;top:412px;width:79px">66</div><div class="cell r" style="left:1121px;top:412px;width:79px">66</div><div class="cell c" style="left:1581px;top:412px;width:69px"><span class="k">일반</span></div><div class="cell c ls2" style="left:1651px;top:412px;width:159px"><span class="sx" style="width:104.80px"><span style="transform:scaleX(0.9696)">20230206S4010014</span></span></div><div class="hl" style="left:0;top:465px;width:1838px"></div><div class="cell" style="left:1833px;top:439px;width:40px"><span class="k">발행</span></div><div class="cell c" style="left:0px;top:439px;width:40px">15</div><div class="cell c" style="left:41px;top:439px;width:99px">2023-02-06</div><div class="cell c" style="left:141px;top:439px;width:79px"><span class="sx" style="width:32.87px"><span style="transform:scaleX(0.9477)">S4010</span></span></div><div class="cell l ls" style="left:221px;top:439px;width:179px"><span class="sx" style="width:44.16px"><span style="transform:scaleX(0.8716)">H/REST_</span></span><span class="k">일체발포</span>1 <span class="sx" style="width:22.40px"><span style="transform:scaleX(0.8400)">LINE</span></span></div><div class="cell c ls" style="left:401px;top:439px;width:79px"><span class="sx" style="width:34.67px"><span style="transform:scaleX(0.8667)">OS_PE</span></span></div><div class="cell l ls" style="left:561px;top:439px;width:119px"><span class="sx" style="width:86.18px"><span style="transform:scaleX(0.9500)">89700-J9330J8Y</span></span></div><div class="cell l ls" style="left:681px;top:439px;width:199px"><span class="sx" style="width:37.49px"><span style="transform:scaleX(0.8521)">H/REST</span></span> <span class="sx" style="width:26.88px"><span style="transform:scaleX(0.8400)">ASSY</span></span> <span class="sx" style="width:14.57px"><span style="transform:scaleX(0.8400)">RR</span></span> <span class="k">일반</span></div><div class="cell c" style="left:881px;top:439px;width:79px"><span class="k">생성</span></div><div class="cell c" style="left:961px;top:439px;width:79px"><span class="k">주간</span></div><div class="cell r" style="left:1041px;top:439px;width:79px">330</div><div class="cell r" style="left:1121px;top:439px;width:79px">320</div><div class="cell r" style="left:1201px;top:439px;width:79px">10</div><div class="cell c" style="left:1581px;top:439px;width:69px"><span class="k">일반</span></div><div class="cell c ls2" style="left:1651px;top:439px;width:159px"><span class="sx" style="width:104.80px"><span style="transform:scaleX(0.9696)">20230206S4010015</span></span></div><div class="hl" style="left:0;top:492px;width:1838px"></div><div class="cell" style="left:1833px;top:466px;width:40px"><span class="k">발행</span></div><div class="cell c" style="left:0px;top:466px;width:40px">16</div><div class="cell c" style="left:41px;top:466px;width:99px">2023-02-06</div><div class="cell c" style="left:141px;top:466px;width:79px"><span class="sx" style="width:32.87px"><span style="transform:scaleX(0.9477)">S4010</span></span></div><div class="cell l ls" style="left:221px;top:466px;width:179px"><span class="sx" style="width:44.16px"><span style="transform:scaleX(0.8716)">H/REST_</span></span><span class="k">일체발포</span>1 <span class="sx" style="width:22.40px"><span style="transform:scaleX(0.8400)">LINE</span></span></div><div class="cell c ls" style="left:401px;top:466px;width:79px"><span class="sx" style="width:34.67px"><span style="transform:scaleX(0.8667)">OS_PE</span></span></div><div class="cell l ls" style="left:561px;top:466px;width:119px"><span class="sx" style="width:88.61px"><span style="transform:scaleX(0.9377)">89700-J9330RVS</span></span></div><div class="cell l ls" style="left:681px;top:466px;width:199px"><span class="sx" style="width:37.49px"><span style="transform:scaleX(0.8521)">H/REST</span></span> <span class="sx" style="width:26.88px"><span style="transform:scaleX(0.8400)">ASSY</span></span> <span class="sx" style="width:14.57px"><span style="transform:scaleX(0.8400)">RR</span></span> <span class="k">일반</span></div><div class="cell c" style="left:881px;top:466px;width:79px"><span class="k">생성</span></div><div class="cell c" style="left:961px;top:466px;width:79px"><span class="k">주간</span></div><div class="cell r" style="left:1041px;top:466px;width:79px">198</div><div class="cell r" style="left:1121px;top:466px;width:79px">198</div><div class="cell c" style="left:1581px;top:466px;width:69px"><span class="k">일반</span></div><div class="cell c ls2" style="left:1651px;top:466px;width:159px"><span class="sx" style="width:104.80px"><span style="transform:scaleX(0.9696)">20230206S4010016</span></span></div><div class="hl" style="left:0;top:519px;width:1838px"></div><div class="cell" style="left:1833px;top:493px;width:40px"><span class="k">발행</span></div><div class="cell c" style="left:0px;top:493px;width:40px">17</div><div class="cell c" style="left:41px;top:493px;width:99px">2023-02-06</div><div class="cell c" style="left:141px;top:493px;width:79px"><span class="sx" style="width:32.87px"><span style="transform:scaleX(0.9477)">S4010</span></span></div><div class="cell l ls" style="left:221px;top:493px;width:179px"><span class="sx" style="width:44.16px"><span style="transform:scaleX(0.8716)">H/REST_</span></span><span class="k">일체발포</span>1 <span class="sx" style="width:22.40px"><span style="transform:scaleX(0.8400)">LINE</span></span></div><div class="cell c ls" style="left:401px;top:493px;width:79px"><span class="sx" style="width:34.67px"><span style="transform:scaleX(0.8667)">OS_PE</span></span></div><div class="cell l ls" style="left:561px;top:493px;width:119px"><span class="sx" style="width:91.41px"><span style="transform:scaleX(0.9323)">89700-K4060UGA</span></span></div><div class="cell l ls" style="left:681px;top:493px;width:199px"><span class="sx" style="width:37.49px"><span style="transform:scaleX(0.8521)">H/REST</span></span> <span class="sx" style="width:26.88px"><span style="transform:scaleX(0.8400)">ASSY</span></span> <span class="sx" style="width:14.57px"><span style="transform:scaleX(0.8400)">RR</span></span> <span class="k">일반</span></div><div class="cell c" style="left:881px;top:493px;width:79px"><span class="k">생성</span></div><div class="cell c" style="left:961px;top:493px;width:79px"><span class="k">주간</span></div><div class="cell r" style="left:1041px;top:493px;width:79px">99</div><div class="cell r" style="left:1121px;top:493px;width:79px">99</div><div class="cell c" style="left:1581px;top:493px;width:69px"><span class="k">일반</span></div><div class="cell c ls2" style="left:1651px;top:493px;width:159px"><span class="sx" style="width:104.80px"><span style="transform:scaleX(0.9696)">20230206S4010017</span></span></div><div class="hl" style="left:0;top:546px;width:1838px"></div><div class="cell" style="left:1833px;top:520px;width:40px"><span class="k">발행</span></div><div class="cell c" style="left:0px;top:520px;width:40px">18</div><div class="cell c" style="left:41px;top:520px;width:99px">2023-02-06</div><div class="cell c" style="left:141px;top:520px;width:79px"><span class="sx" style="width:32.87px"><span style="transform:scaleX(0.9477)">S4010</span></span></div><div class="cell l ls" style="left:221px;top:520px;width:179px"><span class="sx" style="width:44.16px"><span style="transform:scaleX(0.8716)">H/REST_</span></span><span class="k">일체발포</span>1 <span class="sx" style="width:22.40px"><span style="transform:scaleX(0.8400)">LINE</span></span></div><div class="cell c ls" style="left:401px;top:520px;width:79px"><span class="sx" style="width:34.67px"><span style="transform:scaleX(0.8667)">TM_PE</span></span></div><div class="cell l ls" style="left:561px;top:520px;width:119px"><span class="sx" style="width:90.29px"><span style="transform:scaleX(0.9335)">88700-S1050YKN</span></span></div><div class="cell l ls" style="left:681px;top:520px;width:199px"><span class="sx" style="width:37.49px"><span style="transform:scaleX(0.8521)">H/REST</span></span> <span class="sx" style="width:26.88px"><span style="transform:scaleX(0.8400)">ASSY</span></span> <span class="sx" style="width:19.60px"><span style="transform:scaleX(0.8480)">FRT</span></span> <span class="k">고정</span></div><div class="cell c" style="left:881px;top:520px;width:79px"><span class="k">생성</span></div><div class="cell c" style="left:961px;top:520px;width:79px"><span class="k">주간</span></div><div class="cell r" style="left:1041px;top:520px;width:79px">66</div><div class="cell r" style="left:1121px;top:520px;width:79px">66</div><div class="cell c" style="left:1581px;top:520px;width:69px"><span class="k">일반</span></div><div class="cell c ls2" style="left:1651px;top:520px;width:159px"><span class="sx" style="width:104.80px"><span style="transform:scaleX(0.9696)">20230206S4010018</span></span></div><div class="hl" style="left:0;top:573px;width:1838px"></div><div class="cell" style="left:1833px;top:547px;width:40px"><span class="k">발행</span></div><div class="cell c" style="left:0px;top:547px;width:40px">19</div><div class="cell c" style="left:41px;top:547px;width:99px">2023-02-06</div><div class="cell c" style="left:141px;top:547px;width:79px"><span class="sx" style="width:32.87px"><span style="transform:scaleX(0.9477)">S4010</span></span></div><div class="cell l ls" style="left:221px;top:547px;width:179px"><span class="sx" style="width:44.16px"><span style="transform:scaleX(0.8716)">H/REST_</span></span><span class="k">일체발포</span>1 <span class="sx" style="width:22.40px"><span style="transform:scaleX(0.8400)">LINE</span></span></div><div class="cell c ls" style="left:401px;top:547px;width:79px"><span class="sx" style="width:34.67px"><span style="transform:scaleX(0.8667)">TM_PE</span></span></div><div class="cell l ls" style="left:561px;top:547px;width:119px"><span class="sx" style="width:91.41px"><span style="transform:scaleX(0.9323)">89700-S1050YKM</span></span></div><div class="cell l ls" style="left:681px;top:547px;width:199px"><span class="sx" style="width:37.49px"><span style="transform:scaleX(0.8521)">H/REST</span></span> <span class="sx" style="width:26.88px"><span style="transform:scaleX(0.8400)">ASSY</span></span> <span class="sx" style="width:14.57px"><span style="transform:scaleX(0.8400)">RR</span></span> <span class="k">투구</span></div><div class="cell c" style="left:881px;top:547px;width:79px"><span class="k">생성</span></div><div class="cell c" style="left:961px;top:547px;width:79px"><span class="k">주간</span></div><div class="cell r" style="left:1041px;top:547px;width:79px">66</div><div class="cell r" style="left:1121px;top:547px;width:79px">66</div><div class="cell c" style="left:1581px;top:547px;width:69px"><span class="k">일반</span></div><div class="cell c ls2" style="left:1651px;top:547px;width:159px"><span class="sx" style="width:104.80px"><span style="transform:scaleX(0.9696)">20230206S4010019</span></span></div><div class="hl" style="left:0;top:600px;width:1838px"></div><div class="cell" style="left:1833px;top:574px;width:40px"><span class="k">발행</span></div><div class="cell c" style="left:0px;top:574px;width:40px">20</div><div class="cell c" style="left:41px;top:574px;width:99px">2023-02-06</div><div class="cell c" style="left:141px;top:574px;width:79px"><span class="sx" style="width:32.87px"><span style="transform:scaleX(0.9477)">S4010</span></span></div><div class="cell l ls" style="left:221px;top:574px;width:179px"><span class="sx" style="width:44.16px"><span style="transform:scaleX(0.8716)">H/REST_</span></span><span class="k">일체발포</span>1 <span class="sx" style="width:22.40px"><span style="transform:scaleX(0.8400)">LINE</span></span></div><div class="cell c ls" style="left:401px;top:574px;width:79px"><span class="sx" style="width:34.67px"><span style="transform:scaleX(0.8667)">TM_PE</span></span></div><div class="cell l ls" style="left:561px;top:574px;width:119px"><span class="sx" style="width:90.47px"><span style="transform:scaleX(0.9227)">89A70-S1400YKN</span></span></div><div class="cell l ls" style="left:681px;top:574px;width:199px"><span class="sx" style="width:37.49px"><span style="transform:scaleX(0.8521)">H/REST</span></span> <span class="sx" style="width:26.88px"><span style="transform:scaleX(0.8400)">ASSY</span></span> <span class="sx" style="width:14.57px"><span style="transform:scaleX(0.8400)">RR</span></span> <span class="sx" style="width:21.11px"><span style="transform:scaleX(0.8789)">3RD</span></span></div><div class="cell c" style="left:881px;top:574px;width:79px"><span class="k">생성</span></div><div class="cell c" style="left:961px;top:574px;width:79px"><span class="k">주간</span></div><div class="cell r" style="left:1041px;top:574px;width:79px">66</div><div class="cell r" style="left:1121px;top:574px;width:79px">66</div><div class="cell c" style="left:1581px;top:574px;width:69px"><span class="k">일반</span></div><div class="cell c ls2" style="left:1651px;top:574px;width:159px"><span class="sx" style="width:104.80px"><span style="transform:scaleX(0.9696)">20230206S4010020</span></span></div><div class="hl" style="left:0;top:627px;width:1838px"></div><div class="cell" style="left:1833px;top:601px;width:40px"><span class="k">발행</span></div><div class="cell c" style="left:0px;top:601px;width:40px">21</div><div class="cell c" style="left:41px;top:601px;width:99px">2023-02-06</div><div class="cell c" style="left:141px;top:601px;width:79px"><span class="sx" style="width:32.87px"><span style="transform:scaleX(0.9477)">S4020</span></span></div><div class="cell l ls" style="left:221px;top:601px;width:179px"><span class="sx" style="width:44.16px"><span style="transform:scaleX(0.8716)">H/REST_</span></span><span class="k">일체발포</span>2 <span class="sx" style="width:22.40px"><span style="transform:scaleX(0.8400)">LINE</span></span></div><div class="cell c ls" style="left:401px;top:601px;width:79px"><span class="sx" style="width:21.11px"><span style="transform:scaleX(0.8789)">CN7</span></span></div><div class="cell l ls" style="left:561px;top:601px;width:119px"><span class="sx" style="width:90.84px"><span style="transform:scaleX(0.9329)">88700-AA000G8S</span></span></div><div class="cell l ls" style="left:681px;top:601px;width:199px"><span class="sx" style="width:37.49px"><span style="transform:scaleX(0.8521)">H/REST</span></span> <span class="sx" style="width:26.88px"><span style="transform:scaleX(0.8400)">ASSY</span></span> <span class="sx" style="width:19.60px"><span style="transform:scaleX(0.8480)">FRT</span></span> <span class="k">고정</span></div><div class="cell c" style="left:881px;top:601px;width:79px"><span class="k">생성</span></div><div class="cell c" style="left:961px;top:601px;width:79px"><span class="k">주간</span></div><div class="cell r" style="left:1041px;top:601px;width:79px">608</div><div class="cell r" style="left:1121px;top:601px;width:79px">621</div><div class="cell r" style="left:1201px;top:601px;width:79px">-13</div><div class="cell c" style="left:1581px;top:601px;width:69px"><span class="k">일반</span></div><div class="cell c ls2" style="left:1651px;top:601px;width:159px"><span class="sx" style="width:104.80px"><span style="transform:scaleX(0.9696)">20230206S4020001</span></span></div><div class="hl" style="left:0;top:654px;width:1838px"></div><div class="cell" style="left:1833px;top:628px;width:40px"><span class="k">발행</span></div><div class="cell c" style="left:0px;top:628px;width:40px">22</div><div class="cell c" style="left:41px;top:628px;width:99px">2023-02-06</div><div class="cell c" style="left:141px;top:628px;width:79px"><span class="sx" style="width:32.87px"><span style="transform:scaleX(0.9477)">S4020</span></span></div><div class="cell l ls" style="left:221px;top:628px;width:179px"><span class="sx" style="width:44.16px"><span style="transform:scaleX(0.8716)">H/REST_</span></span><span class="k">일체발포</span>2 <span class="sx" style="width:22.40px"><span style="transform:scaleX(0.8400)">LINE</span></span></div><div class="cell c ls" style="left:401px;top:628px;width:79px"><span class="sx" style="width:21.11px"><span style="transform:scaleX(0.8789)">CN7</span></span></div><div class="cell l ls" style="left:561px;top:628px;width:119px"><span class="sx" style="width:90.84px"><span style="transform:scaleX(0.9329)">88700-AA000G8X</span></span></div><div class="cell l ls" style="left:681px;top:628px;width:199px"><span class="sx" style="width:37.49px"><span style="transform:scaleX(0.8521)">H/REST</span></span> <span class="sx" style="width:26.88px"><span style="transform:scaleX(0.8400)">ASSY</span></span> <span class="sx" style="width:19.60px"><span style="transform:scaleX(0.8480)">FRT</span></span> <span class="k">고정</span></div><div class="cell c" style="left:881px;top:628px;width:79px"><span class="k">생성</span></div><div class="cell c" style="left:961px;top:628px;width:79px"><span class="k">주간</span></div><div class="cell r" style="left:1041px;top:628px;width:79px">228</div><div class="cell r" style="left:1121px;top:628px;width:79px">228</div><div class="cell c" style="left:1581px;top:628px;width:69px"><span class="k">일반</span></div><div class="cell c ls2" style="left:1651px;top:628px;width:159px"><span class="sx" style="width:104.80px"><span style="transform:scaleX(0.9696)">20230206S4020002</span></span></div><div class="hl" style="left:0;top:681px;width:1838px"></div><div class="cell" style="left:1833px;top:655px;width:40px"><span class="k">발행</span></div><div class="cell c" style="left:0px;top:655px;width:40px">23</div><div class="cell c" style="left:41px;top:655px;width:99px">2023-02-06</div><div class="cell c" style="left:141px;top:655px;width:79px"><span class="sx" style="width:32.87px"><span style="transform:scaleX(0.9477)">S4020</span></span></div><div class="cell l ls" style="left:221px;top:655px;width:179px"><span class="sx" style="width:44.16px"><span style="transform:scaleX(0.8716)">H/REST_</span></span><span class="k">일체발포</span>2 <span class="sx" style="width:22.40px"><span style="transform:scaleX(0.8400)">LINE</span></span></div><div class="cell c ls" style="left:401px;top:655px;width:79px"><span class="sx" style="width:21.11px"><span style="transform:scaleX(0.8789)">CN7</span></span></div><div class="cell l ls" style="left:561px;top:655px;width:119px"><span class="sx" style="width:92.52px"><span style="transform:scaleX(0.9310)">88700-AA000S8W</span></span></div><div class="cell l ls" style="left:681px;top:655px;width:199px"><span class="sx" style="width:37.49px"><span style="transform:scaleX(0.8521)">H/REST</span></span> <span class="sx" style="width:26.88px"><span style="transform:scaleX(0.8400)">ASSY</span></span> <span class="sx" style="width:19.60px"><span style="transform:scaleX(0.8480)">FRT</span></span> <span class="k">고정</span></div><div class="cell c" style="left:881px;top:655px;width:79px"><span class="k">생성</span></div><div class="cell c" style="left:961px;top:655px;width:79px"><span class="k">주간</span></div><div class="cell r" style="left:1041px;top:655px;width:79px">228</div><div class="cell r" style="left:1121px;top:655px;width:79px">228</div><div class="cell c" style="left:1581px;top:655px;width:69px"><span class="k">일반</span></div><div class="cell c ls2" style="left:1651px;top:655px;width:159px"><span class="sx" style="width:104.80px"><span style="transform:scaleX(0.9696)">20230206S4020003</span></span></div><div class="hl" style="left:0;top:708px;width:1838px"></div><div class="cell" style="left:1833px;top:682px;width:40px"><span class="k">발행</span></div><div class="cell c" style="left:0px;top:682px;width:40px">24</div><div class="cell c" style="left:41px;top:682px;width:99px">2023-02-06</div><div class="cell c" style="left:141px;top:682px;width:79px"><span class="sx" style="width:32.87px"><span style="transform:scaleX(0.9477)">S4020</span></span></div><div class="cell l ls" style="left:221px;top:682px;width:179px"><span class="sx" style="width:44.16px"><span style="transform:scaleX(0.8716)">H/REST_</span></span><span class="k">일체발포</span>2 <span class="sx" style="width:22.40px"><span style="transform:scaleX(0.8400)">LINE</span></span></div><div class="cell c ls" style="left:401px;top:682px;width:79px"><span class="sx" style="width:21.11px"><span style="transform:scaleX(0.8789)">CN7</span></span></div><div class="cell l ls" style="left:561px;top:682px;width:119px"><span class="sx" style="width:92.52px"><span style="transform:scaleX(0.9310)">88700-AA000S8W</span></span></div><div class="cell l ls" style="left:681px;top:682px;width:199px"><span class="sx" style="width:37.49px"><span style="transform:scaleX(0.8521)">H/REST</span></span> <span class="sx" style="width:26.88px"><span style="transform:scaleX(0.8400)">ASSY</span></span> <span class="sx" style="width:19.60px"><span style="transform:scaleX(0.8480)">FRT</span></span> <span class="k">고정</span></div><div class="cell c" style="left:881px;top:682px;width:79px"><span class="k">생성</span></div><div class="cell c" style="left:961px;top:682px;width:79px"><span class="k">주간</span></div><div class="cell r" style="left:1041px;top:682px;width:79px">228</div><div class="cell r" style="left:1121px;top:682px;width:79px">228</div><div class="cell c" style="left:1581px;top:682px;width:69px"><span class="k">일반</span></div><div class="cell c ls2" style="left:1651px;top:682px;width:159px"><span class="sx" style="width:104.80px"><span style="transform:scaleX(0.9696)">20230206S4020004</span></span></div></div><div class="a" style="left:72px;top:822px;width:1836px;height:1px;background:#d6d6d6"></div><div class="a" style="left:1113px;top:823px;width:79px;height:26px;line-height:26px;text-align:right;padding-right:6px;font-weight:bold;color:#555">25,822</div><div class="a" style="left:1193px;top:823px;width:79px;height:26px;line-height:26px;text-align:right;padding-right:6px;font-weight:bold;color:#555">20,870</div><div class="a" style="left:1273px;top:823px;width:79px;height:26px;line-height:26px;text-align:right;padding-right:6px;font-weight:bold;color:#555">4,952</div><div class="a" style="left:72px;top:849px;width:1836px;height:1px;background:#dadada"></div><svg class="a" style="left:73px;top:852px" width="16" height="16"><path d="M0.5 0.8 H14.5 L9.3 7 V14.5 H5.7 V7 Z" fill="#2f74b5"/></svg><div class="a" style="left:95px;top:852px;line-height:18px;letter-spacing:-0.15px;color:#3a76b6">Create Filter</div></body></html>
